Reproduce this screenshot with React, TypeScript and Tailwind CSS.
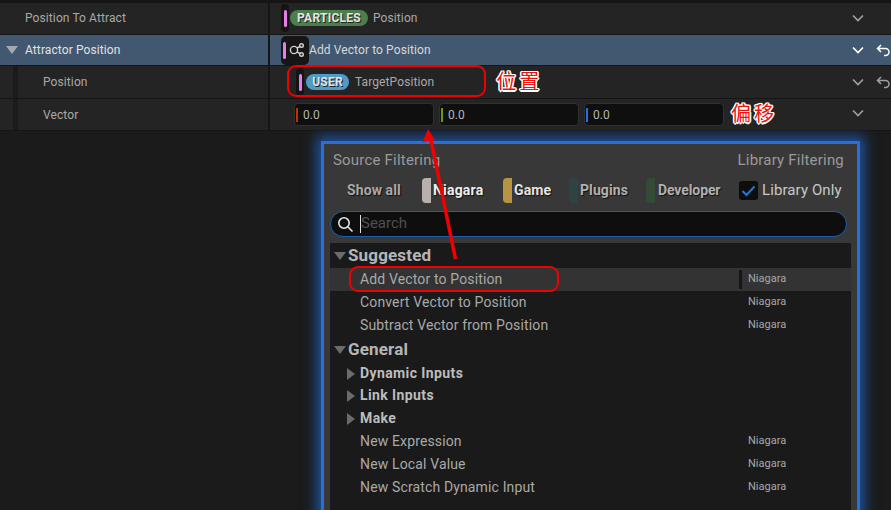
// Niagara module stack with the "add dynamic input" menu open over it

const sans = "font-['Roboto','Liberation_Sans',sans-serif]";

function Chevron({ className = "text-[#a0a0a0]" }: { className?: string }) {
  return (
    <svg width="12" height="8" viewBox="0 0 12 8" className={className}>
      <path d="M1 1.5 L6 6.5 L11 1.5" fill="none" stroke="currentColor" strokeWidth="1.7" />
    </svg>
  );
}

function Undo({ className = "text-[#a0a0a0]" }: { className?: string }) {
  return (
    <svg width="14" height="13" viewBox="0 0 14 13" className={className}>
      <path
        d="M5 1 L1.5 4.5 L5 8 M1.5 4.5 H9.5 A3.4 3.4 0 0 1 9.5 11.5 H8"
        fill="none"
        stroke="currentColor"
        strokeWidth="1.5"
      />
    </svg>
  );
}

function Tri({ open, fill = "#6b6b6b", className = "" }: { open?: boolean; fill?: string; className?: string }) {
  return open ? (
    <svg width="12" height="8" viewBox="0 0 12 8" className={className}>
      <path d="M0 0 H12 L6 8 Z" fill={fill} />
    </svg>
  ) : (
    <svg width="8" height="12" viewBox="0 0 8 12" className={className}>
      <path d="M0 0 L8 6 L0 12 Z" fill={fill} />
    </svg>
  );
}

function PinBar() {
  return (
    <div className="flex h-[28px] w-[8px] items-center justify-center rounded-full bg-[#141414]">
      <div className="h-[17px] w-[3px] rounded-sm bg-[#e57fe6]" />
    </div>
  );
}

function Pill({ label, color, width }: { label: string; color: string; width: string }) {
  return (
    <div
      className={`flex h-[16px] items-center justify-center rounded-full text-[12px] font-bold tracking-[0.25px] text-[#e4e4e4] [text-shadow:1px_1px_0_#222] ${color} ${width}`}
    >
      {label}
    </div>
  );
}

function Row({
  label,
  bg = "bg-[#242424]",
  labelClass = "pl-[25px] text-[#a9a9a9]",
  guide,
  caret,
  chevronClass,
  chevronWrap = "",
  undo,
  height,
  children,
}: {
  label: string;
  bg?: string;
  labelClass?: string;
  guide?: boolean;
  caret?: boolean;
  chevronClass?: string;
  chevronWrap?: string;
  undo?: string;
  height: string;
  children: React.ReactNode;
}) {
  return (
    <div className={`flex items-stretch text-[12px] tracking-[0.1px] ${bg} ${height}`}>
      <div className={`relative flex w-[268px] items-center ${labelClass}`}>
        {guide && <div className="absolute inset-y-0 left-[13px] w-[5px] bg-[#1b1b1b]" />}
        {caret && (
          <div className="absolute left-[6px] top-[11px]">
            <Tri open fill="#a3a8ae" />
          </div>
        )}
        {label}
      </div>
      <div className="w-[2px] bg-[#161616]" />
      <div className="flex flex-1 items-center pl-[11px]">{children}</div>
      <div className={`flex w-[17px] justify-center self-center ${chevronWrap}`}>
        <Chevron className={chevronClass} />
      </div>
      <div className="flex w-[25px] justify-center self-center pl-[9px]">{undo && <Undo className={undo} />}</div>
    </div>
  );
}

function NumInput({ tick }: { tick: string }) {
  return (
    <div className="flex h-[23px] w-[140px] items-center rounded-[4px] border border-[#303030] bg-[#0f0f0f] pl-[1px] text-[12px] text-[#b5b5b5]">
      <div className={`h-[14px] w-[2px] ${tick}`} />
      <span className="ml-[5px]">0.0</span>
    </div>
  );
}

function Note({ text }: { text: string }) {
  return (
    <span className="font-['Noto_Sans_CJK_SC',sans-serif] text-[20px] font-normal leading-none tracking-[3px] text-[#f01010] [text-shadow:-1.5px_0_0_#fff,1.5px_0_0_#fff,0_-1.5px_0_#fff,0_1.5px_0_#fff,1px_1px_0_#fff,-1px_-1px_0_#fff,1px_-1px_0_#fff,-1px_1px_0_#fff]">
      {text}
    </span>
  );
}

function SourceChip({
  label,
  swatch,
  text,
  width,
  gap = "ml-[2px]",
}: {
  label: string;
  swatch: string;
  text: string;
  width: string;
  gap?: string;
}) {
  return (
    <div className={`flex h-[25px] items-center ${width}`}>
      <div className={`h-[25px] w-[9px] rounded-l-[4px] ${swatch}`} />
      <span className={`text-[14px] font-bold [text-shadow:1px_1px_1px_#111] ${gap} ${text}`}>{label}</span>
    </div>
  );
}

function MenuItem({
  label,
  source = true,
  bold,
  arrow,
  active,
}: {
  label: string;
  source?: boolean;
  bold?: boolean;
  arrow?: boolean;
  active?: boolean;
}) {
  return (
    <div className={`relative flex h-[23px] items-center pl-[30px] ${active ? "bg-[#333333]" : ""}`}>
      {arrow && <Tri className="absolute left-[17px] top-[6px]" />}
      <span
        className={
          bold
            ? "text-[14px] font-bold tracking-[0.4px] text-[#bdbdbd]"
            : "text-[14px] tracking-[0.14px] text-[#a9a9a9]"
        }
      >
        {label}
      </span>
      {source && (
        <>
          {active && <div className="absolute left-[409px] top-[2px] h-[19px] w-[3px] bg-[#161616]" />}
          <span className="absolute left-[418px] text-[11px] text-[#a9a9a9]">Niagara</span>
        </>
      )}
    </div>
  );
}

function GroupHead({ label, height }: { label: string; height: string }) {
  return (
    <div className={`flex items-center pl-[4px] ${height}`}>
      <Tri open />
      <span className="ml-[2px] text-[17px] font-bold tracking-[0.15px] text-[#b5b5b5]">{label}</span>
    </div>
  );
}

export default function App() {
  return (
    <div className={`relative h-[510px] w-[891px] overflow-hidden bg-[#1b1b1b] ${sans}`}>
      <div className="flex flex-col gap-[1px] bg-[#151515] pb-[1px] pt-[3px]">
        <Row
          label="Position To Attract"
          labelClass="pb-[1px] pl-[25px] text-[#a9a9a9]"
          chevronWrap="pb-[1px]"
          height="h-[31px]"
        >
          <div className="flex items-center pb-[1px]">
            <PinBar />
            <div className="ml-[1px]">
              <Pill label="PARTICLES" color="bg-[#4b7f4b]" width="w-[78px]" />
            </div>
            <span className="ml-[5px] text-[#a9a9a9]">Position</span>
          </div>
        </Row>
        <Row
          label="Attractor Position"
          bg="bg-[#425870]"
          labelClass="pl-[25px] text-[#e0e0e0]"
          caret
          chevronClass="text-white"
          undo="text-white"
          height="h-[30px]"
        >
          <div className="flex items-center">
            <div className="flex h-[29px] w-[28px] items-center rounded-[5px] bg-[#161616] pl-[2px]">
              <div className="h-[17px] w-[3px] rounded-sm bg-[#e57fe6]" />
              <svg width="16" height="16" viewBox="0 0 16 16" className="ml-[3px] text-[#d0d0d0]">
                <g fill="none" stroke="currentColor" strokeWidth="1.4">
                  <circle cx="5" cy="8" r="3.6" />
                  <circle cx="12.5" cy="3.5" r="1.8" />
                  <circle cx="12.5" cy="12.5" r="1.8" />
                  <path d="M8 6 L11 4.5 M8 10 L11 11.5" />
                </g>
              </svg>
            </div>
            <span className="text-[#d8d8d8]">Add Vector to Position</span>
          </div>
        </Row>
        <Row label="Position" labelClass="pl-[43px] text-[#a9a9a9]" guide undo="text-[#a0a0a0]" height="h-[32px]">
          <div className="ml-[15px] flex items-center">
            <PinBar />
            <div className="ml-[2px]">
              <Pill label="USER" color="bg-[#4f9ac6]" width="w-[43px]" />
            </div>
            <span className="ml-[6px] text-[#a9a9a9]">TargetPosition</span>
            <div className="ml-[62px]">
              <Note text="位置" />
            </div>
          </div>
        </Row>
        <Row label="Vector" labelClass="pl-[43px] text-[#a9a9a9]" guide chevronWrap="pb-[3px]" height="h-[31px]">
          <div className="ml-[13px] flex items-center gap-[5px]">
            <NumInput tick="bg-[#c03008]" />
            <NumInput tick="bg-[#6a9a0a]" />
            <NumInput tick="bg-[#2a70e0]" />
            <div className="ml-[2px]">
              <Note text="偏移" />
            </div>
          </div>
        </Row>
      </div>

      {/* the menu */}
      <div className="ml-[324px] mt-[13px] h-[380px] w-[533px] bg-[#383838] pl-[6px] pr-[6px] shadow-[0_0_0_3px_#2b6fd6,0_0_12px_8px_#1f5099]">
        <div className="flex h-[32px] items-center justify-between pl-[3px] pr-[7px] text-[15px] tracking-[0.2px] text-[#9a9a9a]">
          <span>Source Filtering</span>
          <span>Library Filtering</span>
        </div>
        <div className="flex h-[29px] items-center">
          <span className="ml-[17px] w-[75px] text-[14px] font-bold tracking-[0.1px] text-[#a9a9a9] [text-shadow:1px_1px_1px_#111]">
            Show all
          </span>
          <SourceChip label="Niagara" swatch="bg-[#b9afaf]" text="tracking-[0.2px] text-[#eeeeee]" width="w-[81px]" />
          <SourceChip label="Game" swatch="bg-[#b89340]" text="tracking-[0.1px] text-[#e4e4e4]" width="w-[66px]" />
          <SourceChip label="Plugins" swatch="bg-[#2f4343]" text="tracking-[0.1px] text-[#b0b0b0]" width="w-[77px]" />
          <SourceChip
            label="Developer"
            swatch="bg-[#364a38]"
            text="tracking-[-0.1px] text-[#b0b0b0]"
            width="w-[93px]"
            gap="ml-[3px]"
          />
          <div className="flex h-[19px] w-[19px] items-center justify-center rounded-[3px] bg-[#0d0d0d]">
            <svg width="15" height="12" viewBox="0 0 15 12">
              <path d="M1.5 6 L5.5 10 L13.5 1.5" fill="none" stroke="#1a75e0" strokeWidth="2.2" />
            </svg>
          </div>
          <span className="ml-[4px] text-[15px] tracking-[0.1px] text-[#c8c8c8]">Library Only</span>
        </div>
        <div className="mr-[4px] mt-[6px] flex h-[26px] items-center rounded-full border border-[#1d5fae] bg-[#0e0e0e] pl-[6px]">
          <svg width="17" height="17" viewBox="0 0 17 17">
            <circle cx="7" cy="7" r="5.2" fill="none" stroke="#e4e4e4" strokeWidth="1.6" />
            <path d="M11 11 L15.5 15.5" stroke="#e4e4e4" strokeWidth="1.6" />
          </svg>
          <div className="ml-[6px] h-[18px] w-[1px] bg-[#e0e0e0]" />
          <span className="pb-[1px] text-[15px] text-[#4e4e4e]">Search</span>
        </div>
        <div className="mt-[6px] h-[267px] bg-[#1a1a1a]">
          <GroupHead label="Suggested" height="h-[25px]" />
          <MenuItem label="Add Vector to Position" active />
          <MenuItem label="Convert Vector to Position" />
          <MenuItem label="Subtract Vector from Position" />
          <div className="pt-[1px]">
            <GroupHead label="General" height="h-[23px]" />
          </div>
          <div className="pt-[1px]">
            <MenuItem label="Dynamic Inputs" source={false} bold arrow />
          </div>
          <div className="-mt-[1px]">
            <MenuItem label="Link Inputs" source={false} bold arrow />
          </div>
          <MenuItem label="Make" source={false} bold arrow />
          <MenuItem label="New Expression" />
          <MenuItem label="New Local Value" />
          <MenuItem label="New Scratch Dynamic Input" />
        </div>
      </div>

      {/* red annotations drawn on top of the screenshot */}
      <div className="absolute left-[287px] top-[65px] h-[32px] w-[199px] rounded-[9px] border-2 border-[#f00000]" />
      <div className="absolute left-[349px] top-[266px] h-[26px] w-[210px] rounded-[9px] border-2 border-[#f00000]" />
      <svg width="891" height="510" className="pointer-events-none absolute left-0 top-0">
        <path d="M455.5 259 L431 140" stroke="#f00000" strokeWidth="3.5" fill="none" />
        <path d="M428 129 L422.5 142 L435 140 Z" fill="#f00000" />
      </svg>
    </div>
  );
}
